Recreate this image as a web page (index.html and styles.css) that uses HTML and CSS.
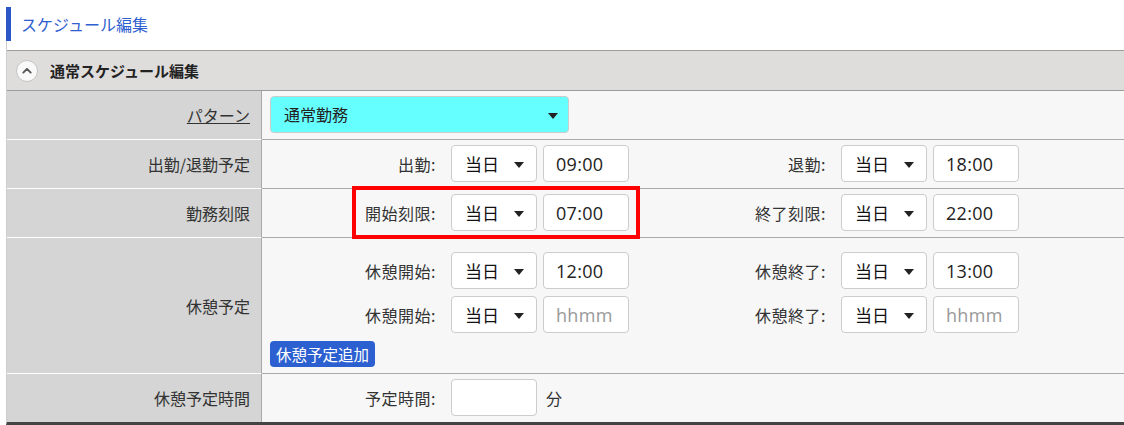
FILE: index.html
```html
<!DOCTYPE html>
<html lang="ja">
<head>
<meta charset="utf-8">
<link rel="stylesheet" href="styles.css">
</head>
<body>
<div class="page">
  <h1 class="title">スケジュール編集</h1>
  <div class="panel">
    <div class="panel-head">
      <span class="toggle"><svg width="22" height="22" viewBox="0 0 22 22"><circle cx="11" cy="11" r="10.5" fill="#f9f9f9" stroke="#c4c4c4"/><path d="M7.3 12.6 L11 8.9 L14.7 12.6" fill="none" stroke="#555" stroke-width="1.9" stroke-linecap="round" stroke-linejoin="round"/></svg></span>
      <span class="head-text">通常スケジュール編集</span>
    </div>
    <div class="grid">
      <div class="lbl"><a class="link" href="#">パターン</a></div>
      <div class="val">
        <div class="sel sel-wide">通常勤務</div>
      </div>

      <div class="lbl">出勤/退勤予定</div>
      <div class="val">
        <div class="line">
          <div class="pair"><span class="plbl">出勤:</span><div class="sel">当日</div><input class="tm" value="09:00"></div>
          <div class="pair"><span class="plbl">退勤:</span><div class="sel">当日</div><input class="tm" value="18:00"></div>
        </div>
      </div>

      <div class="lbl">勤務刻限</div>
      <div class="val mark-host">
        <div class="line">
          <div class="pair"><span class="plbl">開始刻限:</span><div class="sel">当日</div><input class="tm" value="07:00"></div>
          <div class="pair"><span class="plbl">終了刻限:</span><div class="sel">当日</div><input class="tm" value="22:00"></div>
        </div>
        <div class="mark"></div>
      </div>

      <div class="lbl">休憩予定</div>
      <div class="val val-break">
        <div class="line">
          <div class="pair"><span class="plbl">休憩開始:</span><div class="sel">当日</div><input class="tm" value="12:00"></div>
          <div class="pair"><span class="plbl">休憩終了:</span><div class="sel">当日</div><input class="tm" value="13:00"></div>
        </div>
        <div class="line">
          <div class="pair"><span class="plbl">休憩開始:</span><div class="sel">当日</div><input class="tm" placeholder="hhmm"></div>
          <div class="pair"><span class="plbl">休憩終了:</span><div class="sel">当日</div><input class="tm" placeholder="hhmm"></div>
        </div>
        <div class="btn-line"><button class="btn">休憩予定追加</button></div>
      </div>

      <div class="lbl last">休憩予定時間</div>
      <div class="val last">
        <div class="line">
          <div class="pair"><span class="plbl">予定時間:</span><input class="tm" value=""><span class="unit">分</span></div>
        </div>
      </div>
    </div>
  </div>
</div>
</body>
</html>
```
FILE: styles.css
```css
* { box-sizing: border-box; }
html, body { margin: 0; padding: 0; background: #fff; }
body {
  font-family: "Noto Sans CJK JP", "Noto Sans", sans-serif;
  color: #333;
  font-size: 16px;
  width: 1124px;
  overflow: hidden;
}
.page { padding: 7px 0 0 6px; }
.title {
  margin: 0;
  height: 34px;
  border-left: 5px solid #2b57c9;
  padding-left: 10px;
  font-size: 16px;
  font-weight: normal;
  color: #3060d0;
  line-height: 34px;
}
.panel {
  border-left: 1px solid #cfcfcf;
  padding-top: 9px;
  border-bottom: 3px solid #444;
}
.panel-head {
  height: 41px;
  border-top: 1px solid #9c9c9c;
  border-bottom: 1px solid #9c9c9c;
  background: #dfdcdc;
  display: flex;
  align-items: center;
  padding-left: 9px;
}
.toggle { display: flex; width: 22px; height: 22px; margin-right: 12px; }
.head-text { font-size: 15px; font-weight: bold; color: #222; }
.grid {
  display: grid;
  grid-template-columns: 255px 1fr;
}
.lbl {
  background: #d4d5d4;
  border-right: 1px solid #a9a9a9;
  border-bottom: 1px solid #fff;
  display: flex;
  align-items: center;
  justify-content: flex-end;
  padding-right: 11px;
  font-size: 16px;
  color: #333;
}
.lbl.last, .val.last { border-bottom: none; }
.link { color: #333; text-decoration: underline; }
.val {
  background: #f7f7f7;
  border-bottom: 1px solid #a9a9a9;
  padding: 5px 8px 6px;
}
.mark-host { position: relative; }
.mark {
  position: absolute;
  left: 90px;
  top: -3px;
  width: 288px;
  height: 53px;
  border: 4px solid #f00;
  pointer-events: none;
}
.val-break { padding: 14px 8px 6px; }
.val-break .line + .line { margin-top: 7px; }
.line { display: flex; align-items: center; height: 37px; }
.pair { display: flex; align-items: center; width: 390px; }
.plbl {
  width: 166px;
  text-align: right;
  margin-right: 15px;
  color: #333;
  letter-spacing: 0.5px;
}
.sel {
  position: relative;
  width: 86px;
  height: 37px;
  border: 1px solid #cccccc;
  border-radius: 4px;
  background: #fff;
  padding-left: 13px;
  line-height: 35px;
  color: #111;
  font-size: 17px;
  margin-right: 6px;
}
.sel::after {
  content: "";
  position: absolute;
  right: 12px;
  top: 16px;
  border-left: 5px solid transparent;
  border-right: 5px solid transparent;
  border-top: 6px solid #222;
}
.sel-wide {
  width: 299px;
  background: #66ffff;
  padding-left: 13px;
  color: #222;
  font-size: 16px;
}
.sel-wide::after { right: 10px; }
.tm {
  width: 86px;
  height: 37px;
  border: 1px solid #cccccc;
  border-radius: 4px;
  background: #fff;
  padding: 0 12px;
  font-family: "Open Sans", "Noto Sans CJK JP", sans-serif;
  font-size: 18px;
  letter-spacing: 0.3px;
  color: #222;
  outline: none;
}
.tm::placeholder { color: #999; }
.unit { margin-left: 9px; color: #333; }
.btn-line { margin-top: 8px; height: 26px; }
.btn {
  height: 26px;
  padding: 0 6px;
  border: none;
  border-radius: 4px;
  background: #2c5fd0;
  color: #fff;
  font-family: "Noto Sans CJK JP", sans-serif;
  font-size: 15.5px;
  line-height: 26px;
}
```
